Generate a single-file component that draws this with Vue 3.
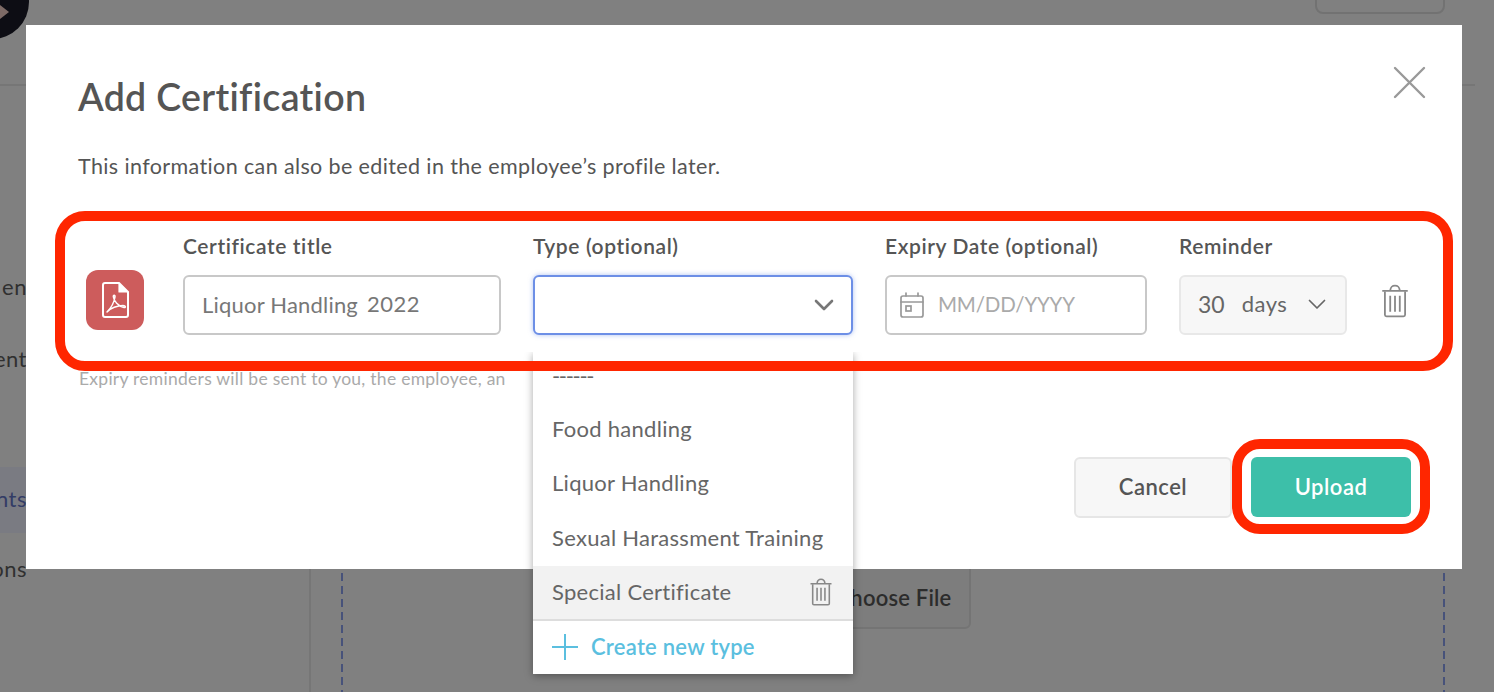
<template>
  <div class="page">
    <div class="backdrop">
      <div class="logo"><span class="logo-play"></span></div>
      <div class="top-btn"></div>
      <div class="head-line"></div>
      <div class="nav">
        <div class="nav-item nav-a">en</div>
        <div class="nav-item nav-b">ent</div>
        <div class="nav-item nav-c">nts</div>
        <div class="nav-item nav-d">ons</div>
      </div>
      <div class="content-line"></div>
      <div class="dash dash-l"></div>
      <div class="dash dash-r"></div>
      <div class="choose">Choose File</div>
    </div>

    <section class="modal">
      <header class="modal-head">
        <h1>Add Certification</h1>
        <svg class="close" width="33" height="33" viewBox="0 0 33 33" fill="none" stroke="#999" stroke-width="2.4" stroke-linecap="round">
          <path d="M2 2 L31 31 M31 2 L2 31" />
        </svg>
      </header>
      <p class="intro">This information can also be edited in the employee’s profile later.</p>

      <div class="row">
        <div class="pdf">
          <svg width="30" height="38" viewBox="0 0 30 38" fill="none" stroke="#fff" stroke-width="2" stroke-linejoin="round" stroke-linecap="round">
            <path d="M5 2 H19 L28 11 V34 a2 2 0 0 1 -2 2 H5 a2 2 0 0 1 -2 -2 V4 a2 2 0 0 1 2 -2 Z" />
            <path d="M19 2 V11 H28" fill="#fff" stroke-width="1.2" />
            <path stroke-width="1.5" d="M7 31 C10 28 14 22 15 16 C15.300 13.500 13 13.500 13.400 16 C14 20 18 25 24 26.500 C26 27 26 24.500 23 24.500 C18 24.500 10 27 7 31 Z" />
          </svg>
        </div>

        <div class="field f-title">
          <label>Certificate title</label>
          <div class="box plain"><span class="val">Liquor Handling</span><span class="val year">2022</span></div>
        </div>

        <div class="field f-type">
          <label>Type (optional)</label>
          <div class="box focus">
            <svg class="chev-big" width="20" height="12" viewBox="0 0 20 12" fill="none" stroke="#777" stroke-width="2.6" stroke-linecap="round" stroke-linejoin="round">
              <path d="M2 2 L10 10 L18 2" />
            </svg>
          </div>

          <div class="menu">
            <ul class="opts">
              <li v-for="o in options" :key="o" class="opt" :class="{ hover: o === 'Special Certificate' }">
                <span>{{ o }}</span>
                <svg v-if="o === 'Special Certificate'" width="24" height="28" viewBox="0 0 26 32" fill="none" stroke="#888" stroke-width="1.800">
                  <path d="M1 6.500 H25 M8.500 6 C9 2.500 10 1.500 13 1.500 C16 1.500 17 2.500 17.500 6" />
                  <path d="M3.500 7 V29 a1.500 1.500 0 0 0 1.500 1.500 H21 a1.500 1.500 0 0 0 1.500 -1.500 V7" />
                  <path d="M8.500 11 V26 M13 11 V26 M17.500 11 V26" />
                </svg>
              </li>
            </ul>
            <div class="create">
              <svg width="26" height="26" viewBox="0 0 26 26" stroke="#5bbfdf" stroke-width="2" fill="none">
                <path d="M13 0 V26 M0 13 H26" />
              </svg>
              <span>Create new type</span>
            </div>
          </div>
        </div>

        <div class="field f-date">
          <label>Expiry Date (optional)</label>
          <div class="box plain date">
            <svg width="24" height="26" viewBox="0 0 24 26" fill="none" stroke="#999" stroke-width="1.700" stroke-linecap="round">
              <rect x="1" y="4" width="22" height="21" rx="2" />
              <path d="M1 10 H23 M6 1 V4 M18 1 V4" />
              <rect x="6" y="14" width="5" height="5" />
            </svg>
            <span class="ph">MM/DD/YYYY</span>
          </div>
        </div>

        <div class="field f-rem">
          <label>Reminder</label>
          <div class="box soft">
            <span class="num">30</span>
            <span class="days">days</span>
            <svg width="18" height="11" viewBox="0 0 18 11" fill="none" stroke="#666" stroke-width="1.700" stroke-linecap="round" stroke-linejoin="round">
              <path d="M1.500 1.500 L9 9 L16.500 1.500" />
            </svg>
          </div>
        </div>

        <svg class="trash" width="28" height="34" viewBox="0 0 26 32" fill="none" stroke="#888" stroke-width="1.700">
          <path d="M1 6.500 H25 M8.500 6 C9 2.500 10 1.500 13 1.500 C16 1.500 17 2.500 17.500 6" />
          <path d="M3.500 7 V29 a1.500 1.500 0 0 0 1.500 1.500 H21 a1.500 1.500 0 0 0 1.500 -1.500 V7" />
          <path d="M8.500 11 V26 M13 11 V26 M17.500 11 V26" />
        </svg>
      </div>

      <p class="hint">Expiry reminders will be sent to you, the employee, an</p>

      <footer class="foot">
        <button class="btn cancel">Cancel</button>
        <div class="ring"><button class="btn upload">Upload</button></div>
      </footer>
    </section>
  </div>
</template>

<script setup>
const options = ['------', 'Food handling', 'Liquor Handling', 'Sexual Harassment Training', 'Special Certificate']
</script>

<style>
html, body { margin: 0; background: #808080; overflow: hidden; }
</style>

<style scoped>
* { box-sizing: border-box; }
.page {
  position: relative;
  width: 1494px;
  height: 692px;
  overflow: hidden;
  background: #808080;
  padding: 25px 32px 0 26px;
  font-family: "Lato", "Liberation Sans", sans-serif;
  color: #555;
}

/* dimmed page behind the dialog */
.backdrop { position: absolute; inset: 0; }
.logo {
  position: absolute; left: -45px; top: -35px; width: 74px; height: 74px;
  border-radius: 50%; background: #0d0d14;
}
.logo-play {
  position: absolute; left: 45px; top: 40px; width: 0; height: 0;
  border-left: 9px solid #7d6a66; border-top: 7px solid transparent; border-bottom: 7px solid transparent;
}
.top-btn {
  position: absolute; left: 1315px; top: -10px; width: 130px; height: 24px;
  border: 2px solid #727272; border-radius: 8px;
}
.head-line { position: absolute; left: 0; top: 84px; width: 1475px; height: 2px; background: #767676; }
.nav { position: absolute; left: 0; top: 0; width: 27px; height: 692px; }
.nav-item {
  position: absolute; left: 0; width: 27px; height: 26px; line-height: 26px;
  display: flex; justify-content: flex-end; font-size: 22px; letter-spacing: 0.5px; color: #303030; white-space: nowrap;
}
.nav-a { top: 274px; }
.nav-b { top: 346px; }
.nav-c { top: 467px; height: 66px; line-height: 64px; color: #333c66; background: #7a7b82; }
.nav-d { top: 556px; }
.content-line { position: absolute; left: 309px; top: 500px; width: 2px; height: 192px; background: #767676; }
.dash {
  position: absolute; top: 560px; width: 2px; height: 132px;
  background: repeating-linear-gradient(to bottom, #47527a 0 8px, transparent 8px 13px);
}
.dash-l { left: 341px; }
.dash-r { left: 1443px; }
.choose {
  position: absolute; left: 816px; top: 560px; width: 155px; height: 69px;
  padding: 6px 0 0 0; line-height: 60px; text-align: center;
  border: 2px solid #747474; border-radius: 6px; background: #7d7d7d;
  font-size: 22px; font-weight: 600; letter-spacing: 0.2px; color: #2c2c2c;
}

/* dialog */
.modal { position: relative; width: 1436px; height: 544px; background: #fff; }
.modal-head {
  display: flex; justify-content: space-between; align-items: flex-start;
  padding: 41px 36px 0 52px; height: 120px;
}
h1 { margin: 8px 0 0; font-size: 37.500px; line-height: 46px; font-weight: 600; color: #555; letter-spacing: 0.32px; }
.intro { margin: 0 0 0 52px; height: 66px; padding-top: 7px; font-size: 21.500px; line-height: 28px; color: #555; letter-spacing: 0.38px; }

.row {
  position: relative;
  display: flex; align-items: flex-start; gap: 32px;
  width: 1398px; height: 160px; margin-left: 29px;
  padding: 22px 0 0 31px;
}
/* the red frame runs over the open dropdown */
.row::after {
  content: ""; position: absolute; inset: 0; z-index: 4; pointer-events: none;
  border: 10px solid #ff2600; border-radius: 30px;
}
.pdf {
  display: flex; align-items: center; justify-content: center;
  width: 58px; height: 60px; margin: 37px 7px 0 0;
  border-radius: 12px; background: #cd5c5c;
}
.field { position: relative; flex: none; }
label { display: block; height: 26px; margin-bottom: 16px; font-size: 21px; line-height: 26px; font-weight: 600; color: #555; letter-spacing: 0.6px; white-space: nowrap; }
.box {
  display: flex; align-items: center; height: 60px; border-radius: 6px; font-size: 22px;
}
.plain { border: 2px solid #c8c8c8; background: #fff; padding-left: 17px; padding-bottom: 2px; }
.f-title { width: 318px; }
.f-type { width: 320px; }
.f-date { width: 262px; }
.f-rem { width: 168px; }
.val { color: #777; letter-spacing: 0.2px; }
.year { margin-left: 9px; margin-bottom: 2px; letter-spacing: 0.5px; }
.focus {
  border: 2px solid #6d8fe6; background: #fff; justify-content: flex-end; padding-right: 17px;
  box-shadow: 0 0 5px rgba(109, 143, 230, 0.55);
}
.date { padding-left: 13px; }
.date svg { margin-top: 2px; }
.ph { margin-left: 14px; font-size: 20.500px; color: #aaa; letter-spacing: -0.2px; }
.soft { border: 2px solid #e8e8e8; background: #f7f7f7; padding: 0 0 3px 17px; color: #666; }
.num { font-size: 23px; }
.days { margin-left: 17px; letter-spacing: 0.5px; }
.soft svg { margin: 2px 0 0 21px; }
.trash { margin: 51px 0 0 2px; }

.menu {
  position: absolute; left: 0; top: 119px; z-index: 3; width: 320px; height: 322px;
  background: #fff; box-shadow: 0 2px 8px rgba(0, 0, 0, 0.35);
  clip-path: inset(0 -12px -12px -12px);
}
.opts { list-style: none; margin: 0; padding: 0; height: 267px; overflow: hidden; }
.opt {
  display: flex; align-items: center; justify-content: space-between;
  height: 54.500px; padding: 0 20px 2px 19px; font-size: 22px; color: #666; letter-spacing: 0.28px;
}
.opt:first-child { height: 50px; padding-bottom: 3px; letter-spacing: -1.300px; }
.opt.hover { height: 54px; background: #f2f2f2; }
.create {
  display: flex; align-items: center; gap: 13px; height: 55px; padding: 0 0 2px 19px;
  border-top: 2px solid #ddd; font-size: 22px; font-weight: 600; letter-spacing: 0.25px; color: #5bbfdf;
}

.hint { margin: 0 0 0 53px; height: 68px; padding-top: 0; font-size: 17.500px; line-height: 16px; color: #aaa; letter-spacing: 0.26px; white-space: nowrap; }

.foot { display: flex; justify-content: flex-end; align-items: flex-start; padding-right: 32px; }
.btn {
  height: 60px; border-radius: 6px; font-family: inherit; font-size: 22px; font-weight: 600; letter-spacing: 0.5px; padding: 0 0 2px; cursor: pointer;
}
.cancel { width: 158px; height: 61px; margin-top: 18px; background: #f7f7f7; border: 2px solid #e6e6e6; color: #555; }
.ring { border: 10px solid #ff2600; border-radius: 28px; padding: 8px 9px 7px 9px; width: 198px; height: 95px; }
.upload { width: 160px; border: none; background: #3dbfa9; color: #fff; }
</style>
